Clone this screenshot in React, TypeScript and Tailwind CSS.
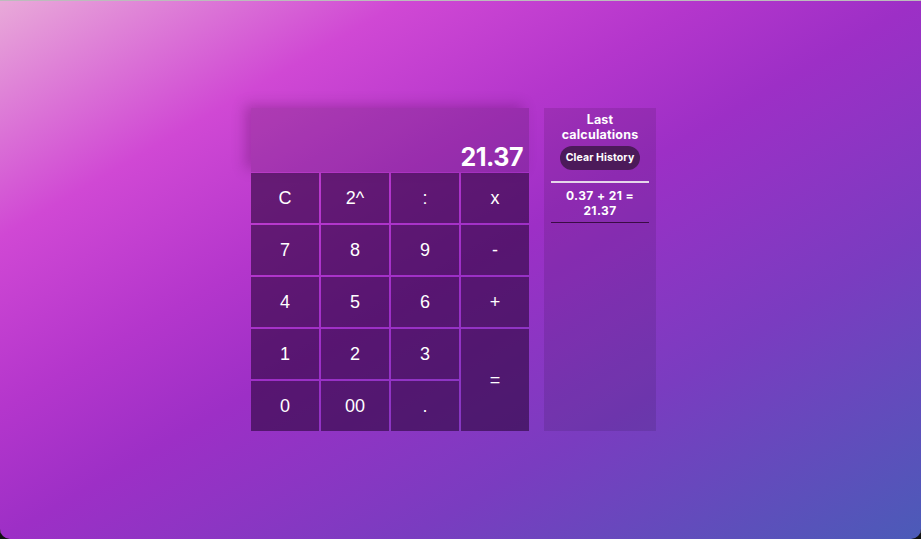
import React, { useState } from 'react';

const keys = [
  { label: 'C' },
  { label: '2^' },
  { label: ':' },
  { label: 'x' },
  { label: '7' },
  { label: '8' },
  { label: '9' },
  { label: '-' },
  { label: '4' },
  { label: '5' },
  { label: '6' },
  { label: '+' },
  { label: '1' },
  { label: '2' },
  { label: '3' },
  { label: '=', tall: true },
  { label: '0' },
  { label: '00' },
  { label: '.' },
];

export default function App() {
  const [display] = useState('21.37');
  const [history] = useState(['0.37 + 21 = 21.37']);

  return (
    <div className="h-[539px] w-full bg-[#111]">
      <div className="h-full w-full rounded-b-[10px] shadow-[inset_0_1px_0_#bcbcbc] bg-[linear-gradient(to_bottom_right,#e9aad9_0%,#d048d4_22%,#b436cc_38%,#9d2fc6_50%,#7a3cc0_72%,#4b5bb8_100%)] flex items-center justify-center pr-[14px]">
        <div className="flex items-start gap-[15px]">
          {/* calculator */}
          <div className="w-[278px] flex flex-col gap-px">
            <div className="h-[64px] bg-black/15 shadow-[-6px_-3px_12px_rgba(60,0,60,0.25)] flex items-end justify-end px-[6px] pb-[2px]">
              <span className="text-white text-[25px] font-bold tracking-[-0.5px] leading-none font-['Inter',sans-serif]">
                {display}
              </span>
            </div>
            <div className="grid grid-cols-4 grid-rows-[repeat(5,50px)] gap-[2px]">
              {keys.map((k) => (
                <button
                  key={k.label}
                  className={
                    'bg-[#2a0538]/60 text-white text-[18px] font-["Liberation_Sans",Arial,sans-serif] flex items-center justify-center' +
                    (k.tall ? ' row-span-2' : '')
                  }
                >
                  {k.label}
                </button>
              ))}
            </div>
          </div>

          {/* history */}
          <div className="w-[112px] h-[323px] bg-black/10 px-[7px] pt-[4px] flex flex-col items-center text-white font-['Inter',sans-serif]">
            <h2 className="text-[12.5px] font-bold leading-[15px] text-center tracking-[0.2px]">
              Last
              <br />
              calculations
            </h2>
            <button className="mt-[4px] h-[24px] px-[6px] rounded-full bg-[#4c1a5a] text-[10.5px] font-bold tracking-[0.1px]">
              Clear History
            </button>
            <div className="w-full mt-[11px] border-t-2 border-[#e6d6ea]" />
            {history.map((h) => (
              <div key={h} className="w-full pt-[5px] pb-[4px] border-b border-[#3a0c44] text-center text-[12px] font-bold leading-[15px] tracking-[0.4px]">
                0.37 + 21 =
                <br />
                21.37
              </div>
            ))}
          </div>
        </div>
      </div>
    </div>
  );
}
